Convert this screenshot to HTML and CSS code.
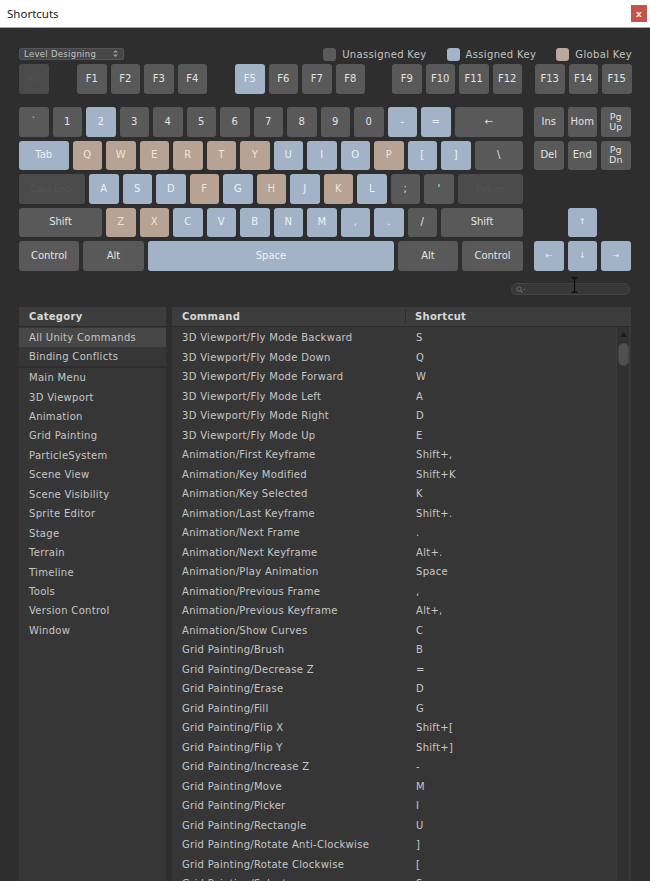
FILE: index.html
```html
<!DOCTYPE html>
<html>
<head>
<meta charset="utf-8">
<title>Shortcuts</title>
<link rel="stylesheet" href="styles.css">
</head>
<body>
<div class="titlebar">
  <span class="title">Shortcuts</span>
  <span class="close">x</span>
</div>
<div class="main">
  <div class="toolbar">
    <div class="dropdown">
      <span>Level Designing</span>
      <svg width="5" height="7" viewBox="0 0 5 7"><path d="M2.5 0 L5 2.6 H0Z M2.5 7 L5 4.4 H0Z" fill="#9a9a9a"/></svg>
    </div>
    <div class="legend">
      <span class="sw sw-grey"></span><span class="lg-text">Unassigned Key</span>
      <span class="sw sw-blue"></span><span class="lg-text">Assigned Key</span>
      <span class="sw sw-tan"></span><span class="lg-text">Global Key</span>
    </div>
  </div>

  <div class="frow">
    <div class="key off">Fn</div>
    <div class="key g1">F1</div><div class="key">F2</div><div class="key">F3</div><div class="key">F4</div>
    <div class="key blue g2">F5</div><div class="key">F6</div><div class="key">F7</div><div class="key">F8</div>
    <div class="key g3">F9</div><div class="key">F10</div><div class="key">F11</div><div class="key">F12</div>
    <div class="key g4">F13</div><div class="key">F14</div><div class="key">F15</div>
  </div>

  <div class="keyboard">
    <div class="mainkeys">
      <div class="row">
        <div class="key sm">`</div><div class="key">1</div><div class="key blue">2</div><div class="key">3</div><div class="key">4</div><div class="key">5</div><div class="key">6</div><div class="key">7</div><div class="key">8</div><div class="key">9</div><div class="key">0</div><div class="key blue">-</div><div class="key blue">=</div><div class="key w-bksp">&#8592;</div>
      </div>
      <div class="row">
        <div class="key blue w-tab">Tab</div><div class="key tan">Q</div><div class="key tan">W</div><div class="key tan">E</div><div class="key tan">R</div><div class="key tan">T</div><div class="key tan">Y</div><div class="key blue">U</div><div class="key blue">I</div><div class="key blue">O</div><div class="key tan">P</div><div class="key blue">[</div><div class="key blue">]</div><div class="key w-bslash">\</div>
      </div>
      <div class="row">
        <div class="key off w-caps">Caps Lock</div><div class="key blue">A</div><div class="key blue">S</div><div class="key blue">D</div><div class="key tan">F</div><div class="key blue">G</div><div class="key tan">H</div><div class="key blue">J</div><div class="key tan">K</div><div class="key blue">L</div><div class="key">;</div><div class="key">'</div><div class="key off w-ret">Return</div>
      </div>
      <div class="row">
        <div class="key w-shift">Shift</div><div class="key tan">Z</div><div class="key tan">X</div><div class="key blue">C</div><div class="key blue">V</div><div class="key blue">B</div><div class="key blue">N</div><div class="key blue">M</div><div class="key blue">,</div><div class="key blue">.</div><div class="key">/</div><div class="key w-rshift">Shift</div>
      </div>
      <div class="row">
        <div class="key w-ctrl">Control</div><div class="key w-alt">Alt</div><div class="key blue w-space">Space</div><div class="key w-alt2">Alt</div><div class="key w-ctrl2">Control</div>
      </div>
    </div>
    <div class="navkeys">
      <div class="key">Ins</div><div class="key">Hom</div><div class="key two">Pg<br>Up</div>
      <div class="key">Del</div><div class="key">End</div><div class="key two">Pg<br>Dn</div>
      <div class="blank"></div><div class="blank"></div><div class="blank"></div>
      <div class="blank"></div><div class="key blue sm">&#8593;</div><div class="blank"></div>
      <div class="key blue sm">&#8592;</div><div class="key blue sm">&#8595;</div><div class="key blue sm">&#8594;</div>
    </div>
  </div>

  <div class="searchrow">
    <div class="search">
      <svg width="10" height="7" viewBox="0 0 10 7"><circle cx="3" cy="3" r="2.2" fill="none" stroke="#6a6a6a" stroke-width="1"/><path d="M4.6 4.6 L6.4 6.4" stroke="#6a6a6a" stroke-width="1.1"/><path d="M7 3 H9.4 L8.2 4.3Z" fill="#6a6a6a"/></svg>
    </div>
  </div>

  <div class="tables">
    <div class="catpanel">
      <div class="head">Category</div>
      <div class="list">
        <div class="crow sel">All Unity Commands</div>
        <div class="crow sep">Binding Conflicts</div>
        <div class="crow">Main Menu</div>
        <div class="crow">3D Viewport</div>
        <div class="crow">Animation</div>
        <div class="crow">Grid Painting</div>
        <div class="crow">ParticleSystem</div>
        <div class="crow">Scene View</div>
        <div class="crow">Scene Visibility</div>
        <div class="crow">Sprite Editor</div>
        <div class="crow">Stage</div>
        <div class="crow">Terrain</div>
        <div class="crow">Timeline</div>
        <div class="crow">Tools</div>
        <div class="crow">Version Control</div>
        <div class="crow">Window</div>
      </div>
    </div>
    <div class="cmdpanel">
      <div class="head cmdhead">
        <span class="c1">Command</span>
        <span class="c2">Shortcut</span>
      </div>
      <div class="cmdbody">
        <div class="cmdlist">
          <div class="r"><span class="c1">3D Viewport/Fly Mode Backward</span><span class="c2">S</span></div>
          <div class="r"><span class="c1">3D Viewport/Fly Mode Down</span><span class="c2">Q</span></div>
          <div class="r"><span class="c1">3D Viewport/Fly Mode Forward</span><span class="c2">W</span></div>
          <div class="r"><span class="c1">3D Viewport/Fly Mode Left</span><span class="c2">A</span></div>
          <div class="r"><span class="c1">3D Viewport/Fly Mode Right</span><span class="c2">D</span></div>
          <div class="r"><span class="c1">3D Viewport/Fly Mode Up</span><span class="c2">E</span></div>
          <div class="r"><span class="c1">Animation/First Keyframe</span><span class="c2">Shift+,</span></div>
          <div class="r"><span class="c1">Animation/Key Modified</span><span class="c2">Shift+K</span></div>
          <div class="r"><span class="c1">Animation/Key Selected</span><span class="c2">K</span></div>
          <div class="r"><span class="c1">Animation/Last Keyframe</span><span class="c2">Shift+.</span></div>
          <div class="r"><span class="c1">Animation/Next Frame</span><span class="c2">.</span></div>
          <div class="r"><span class="c1">Animation/Next Keyframe</span><span class="c2">Alt+.</span></div>
          <div class="r"><span class="c1">Animation/Play Animation</span><span class="c2">Space</span></div>
          <div class="r"><span class="c1">Animation/Previous Frame</span><span class="c2">,</span></div>
          <div class="r"><span class="c1">Animation/Previous Keyframe</span><span class="c2">Alt+,</span></div>
          <div class="r"><span class="c1">Animation/Show Curves</span><span class="c2">C</span></div>
          <div class="r"><span class="c1">Grid Painting/Brush</span><span class="c2">B</span></div>
          <div class="r"><span class="c1">Grid Painting/Decrease Z</span><span class="c2">=</span></div>
          <div class="r"><span class="c1">Grid Painting/Erase</span><span class="c2">D</span></div>
          <div class="r"><span class="c1">Grid Painting/Fill</span><span class="c2">G</span></div>
          <div class="r"><span class="c1">Grid Painting/Flip X</span><span class="c2">Shift+[</span></div>
          <div class="r"><span class="c1">Grid Painting/Flip Y</span><span class="c2">Shift+]</span></div>
          <div class="r"><span class="c1">Grid Painting/Increase Z</span><span class="c2">-</span></div>
          <div class="r"><span class="c1">Grid Painting/Move</span><span class="c2">M</span></div>
          <div class="r"><span class="c1">Grid Painting/Picker</span><span class="c2">I</span></div>
          <div class="r"><span class="c1">Grid Painting/Rectangle</span><span class="c2">U</span></div>
          <div class="r"><span class="c1">Grid Painting/Rotate Anti-Clockwise</span><span class="c2">]</span></div>
          <div class="r"><span class="c1">Grid Painting/Rotate Clockwise</span><span class="c2">[</span></div>
          <div class="r"><span class="c1">Grid Painting/Select</span><span class="c2">S</span></div>
        </div>
        <div class="scrollbar">
          <svg class="sup" width="7" height="5" viewBox="0 0 7 5"><path d="M3.5 0 L7 5 H0Z" fill="#1c1c1c"/></svg>
          <div class="thumb"></div>
        </div>
      </div>
    </div>
  </div>
</div>
<svg class="ibeam" width="7" height="16" viewBox="0 0 7 16"><path d="M0.5 0.7 H2.5 L3.5 1.7 L4.5 0.7 H6.5 M3.5 1.7 V14.3 M0.5 15.3 H2.5 L3.5 14.3 L4.5 15.3 H6.5" fill="none" stroke="#0a0a0a" stroke-width="1.2"/></svg>
</body>
</html>
```

FILE: styles.css
```css
* { box-sizing: border-box; }
html, body { margin: 0; padding: 0; }
body {
  width: 650px;
  height: 881px;
  overflow: hidden;
  position: relative;
  background: #2e2e2e;
  font-family: "DejaVu Sans", Verdana, sans-serif;
  font-size: 10px;
  color: #c6c6c6;
}

.titlebar {
  height: 28px;
  background: #ffffff;
  border-bottom: 1px solid #a8a8a8;
  display: flex;
  align-items: center;
  justify-content: space-between;
  padding: 0 3px 1px 7px;
}
.title {
  font-family: "Noto Sans", "Open Sans", sans-serif;
  font-size: 11.5px;
  color: #1a1a1a;
}
.close {
  width: 16px;
  height: 17px;
  background: #c5524b;
  color: #f4e4e2;
  font-family: "DejaVu Sans", sans-serif;
  font-weight: bold;
  font-size: 9px;
  display: flex;
  align-items: center;
  justify-content: center;
  margin-top: 1px;
}

.main { padding: 19px 0 0 19px; }

.toolbar {
  width: 613px;
  height: 13px;
  display: flex;
  justify-content: space-between;
  align-items: center;
}
.dropdown {
  width: 105px;
  height: 12px;
  background: #464646;
  border: 1px solid #555555;
  border-radius: 2px;
  display: flex;
  align-items: center;
  justify-content: space-between;
  padding: 0 5px 0 4px;
  font-size: 8.5px;
  color: #c2c2c2;
  letter-spacing: 0.3px;
}
.legend { display: flex; align-items: center; padding-top: 1px; }
.sw {
  width: 13px;
  height: 13px;
  border-radius: 3px;
  margin-right: 6px;
}
.sw-grey { background: #5a5a5a; }
.sw-blue { background: #a3b3c8; margin-left: 20px; }
.sw-tan { background: #b9a99d; margin-left: 20px; }
.lg-text { font-size: 10px; color: #c2c2c2; letter-spacing: 0.35px; }

.key {
  width: 29.5px;
  height: 29.5px;
  background: #595959;
  border-radius: 3px;
  color: #e2e2e2;
  font-size: 10px;
  display: flex;
  align-items: center;
  justify-content: center;
  text-align: center;
  line-height: 10px;
  flex: none;
}
.key.blue { background: #a3b3c7; color: #edf1f6; }
.key.tan { background: #b7a294; color: #efe4dc; }
.key.off { background: #4b4b4b; color: #545454; font-size: 8.5px; }
.key.sm { font-size: 8px; }
.key.two { font-size: 9.5px; line-height: 10px; }

.frow {
  margin-top: 4px;
  display: flex;
  gap: 4px;
}
.frow .g1 { margin-left: 24.5px; }
.frow .g2 { margin-left: 24px; }
.frow .g3 { margin-left: 23px; }
.frow .g4 { margin-left: 9px; }

.keyboard {
  margin-top: 13.5px;
  display: flex;
  gap: 10.5px;
}
.mainkeys {
  width: 504.5px;
  display: flex;
  flex-direction: column;
  gap: 4px;
}
.row { display: flex; gap: 4px; }
.w-bksp { width: 68.5px; }
.w-tab { width: 49.5px; }
.w-bslash { width: 48.5px; }
.w-caps { width: 66px; }
.w-ret { width: 65.5px; }
.w-shift { width: 83px; }
.w-rshift { width: 82px; }
.w-ctrl { width: 60px; }
.w-alt { width: 61px; }
.w-space { width: 246px; }
.w-alt2 { width: 60px; }
.w-ctrl2 { width: 61px; }

.navkeys {
  display: grid;
  grid-template-columns: repeat(3, 29.5px);
  grid-auto-rows: 29.5px;
  gap: 4px;
}
.blank { width: 29.5px; height: 29.5px; }

.searchrow {
  margin-top: 12.5px;
  padding-left: 492px;
}
.search {
  width: 119px;
  height: 12px;
  border-radius: 6px;
  background: #383838;
  border: 1px solid #434343;
  display: flex;
  align-items: center;
  padding-left: 4px;
}

.tables {
  margin-top: 12px;
  display: flex;
  gap: 6px;
  height: 600px;
}
.catpanel {
  width: 147px;
  background: #363636;
}
.cmdpanel {
  width: 459px;
  background: #363636;
  display: flex;
  flex-direction: column;
}
.head {
  height: 20px;
  background: #3d3d3d;
  border-bottom: 1px solid #2c2c2c;
  font-weight: bold;
  color: #d6d6d6;
  display: flex;
  align-items: center;
  padding-left: 10px;
  letter-spacing: 0.3px;
  flex: none;
}
.list { padding-top: 0.5px; }
.crow {
  height: 19.45px;
  display: flex;
  align-items: center;
  padding-left: 10px;
  letter-spacing: 0.3px;
}
.crow.sel { background: #474747; }
.crow.sep { border-bottom: 2px solid #2d2d2d; height: 21px; }

.cmdhead { padding-left: 0; }
.cmdhead .c1 {
  width: 234px;
  padding-left: 10px;
  border-right: 1px solid #2c2c2c;
  height: 13px;
  display: flex;
  align-items: center;
}
.cmdhead .c2 { padding-left: 9px; }

.cmdbody { display: flex; flex: 1; }
.cmdlist { flex: 1; padding-top: 0.8px; }
.r {
  height: 19.52px;
  display: flex;
  align-items: center;
  letter-spacing: 0.3px;
}
.r .c1 { width: 234px; padding-left: 10px; }
.r .c2 { padding-left: 10px; }

.scrollbar {
  width: 14px;
  margin-right: 1px;
  background: #313131;
  border-left: 1px solid #3c3c3c;
  border-right: 1px solid #3c3c3c;
  display: flex;
  flex-direction: column;
  align-items: center;
  padding-top: 5px;
}
.sup { flex: none; }
.thumb {
  margin-top: 6px;
  width: 11px;
  height: 23px;
  border-radius: 5px;
  background: #505050;
  border: 1px solid #444444;
}

.ibeam {
  position: absolute;
  left: 571px;
  top: 277px;
}
```
